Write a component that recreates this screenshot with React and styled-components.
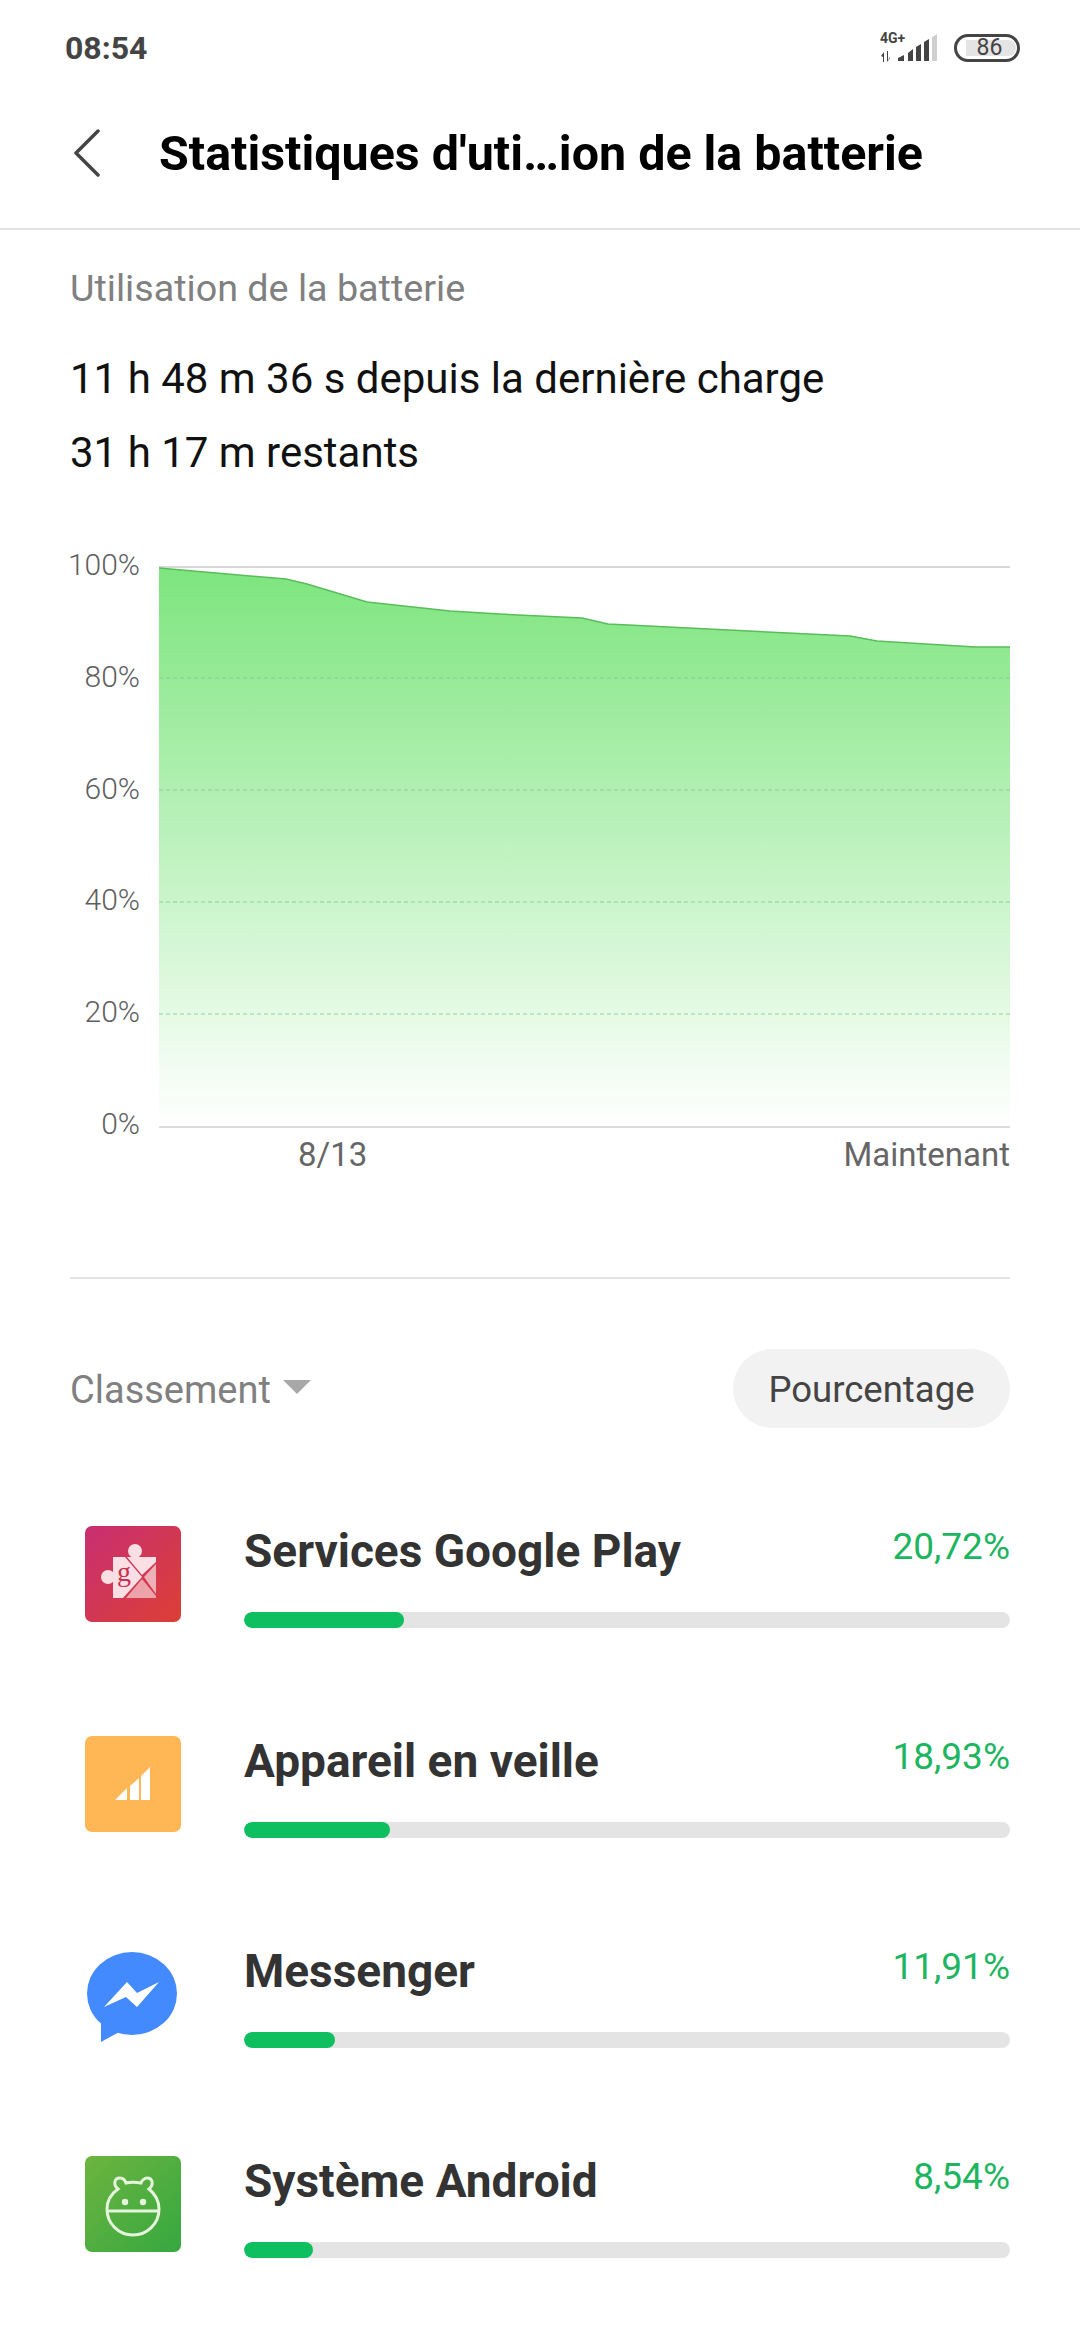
import React from "react";
import styled, { createGlobalStyle } from "styled-components";

const GlobalStyle = createGlobalStyle`
  html, body { margin: 0; padding: 0; background: #fff; }
  body { font-family: Roboto, "Liberation Sans", sans-serif; }
`;

const apps = [
  { name: "Services Google Play", percent: "20,72%", fill: 160, Icon: PlayIcon },
  { name: "Appareil en veille", percent: "18,93%", fill: 146, Icon: IdleIcon },
  { name: "Messenger", percent: "11,91%", fill: 91, Icon: MessengerIcon },
  { name: "Système Android", percent: "8,54%", fill: 69, Icon: AndroidIcon },
];

const curve = "0,2 127,13 148,18 208,36 291,45 341,48 423,52 449,58 691,70 718,75 816,81 851,81";

function PlayIcon() {
  return (
    <svg width="96" height="96" viewBox="0 0 96 96">
      <defs>
        <linearGradient id="playBg" x1="0" y1="0" x2="1" y2="1">
          <stop offset="0" stopColor="#c72f72" />
          <stop offset="1" stopColor="#dc3f35" />
        </linearGradient>
      </defs>
      <rect width="96" height="96" rx="7" fill="url(#playBg)" />
      <circle cx="50" cy="25" r="7" fill="#fbdfe4" />
      <circle cx="23" cy="51" r="7" fill="#fbdfe4" />
      <path d="M28 31H40L57 51L38 72H28Z" fill="#fbdfe4" />
      <path d="M42 31H71V36L57 49Z" fill="#fbdfe4" />
      <path d="M71 38V68L59 51Z" fill="#eeb0b8" />
      <path d="M41 72L57 53L71 70V72Z" fill="#eca3ac" />
      <text x="39" y="55" fontFamily="'Liberation Serif', serif" fontSize="28" fill="#c9304f" textAnchor="middle">g</text>
    </svg>
  );
}

function IdleIcon() {
  return (
    <svg width="96" height="96" viewBox="0 0 96 96">
      <rect width="96" height="96" rx="7" fill="#ffb655" />
      <path d="M30 64L42 52V64Z M45 64V50L54 42V64Z M56 64V40L65 31V64Z" fill="#fff" />
    </svg>
  );
}

function MessengerIcon() {
  return (
    <svg width="96" height="96" viewBox="0 0 96 96">
      <ellipse cx="47" cy="47.500" rx="45" ry="41.500" fill="#448aff" />
      <path d="M16 70V96L36 85Z" fill="#448aff" />
      <path d="M19 61L42 36L52 47L74 36L52 61L41 51Z" fill="#fff" />
    </svg>
  );
}

function AndroidIcon() {
  return (
    <svg width="96" height="96" viewBox="0 0 96 96">
      <defs>
        <linearGradient id="droidBg" x1="0" y1="0" x2="1" y2="1">
          <stop offset="0" stopColor="#6db43f" />
          <stop offset="1" stopColor="#35a840" />
        </linearGradient>
      </defs>
      <rect width="96" height="96" rx="7" fill="url(#droidBg)" />
      <g fill="none" stroke="#e6f4dd" strokeWidth="3">
        <path d="M33 33C28 29 29 22 35 22C38 22 40 24 41 27C45 26 51 26 56 27C57 24 60 22 62 22C68 22 69 29 64 33C70 38 74 45 74 53C74 68 62 79 48 79C34 79 22 68 22 53C22 45 26 38 33 33Z" />
        <path d="M23 55H73" />
      </g>
      <circle cx="40" cy="46" r="3.200" fill="#e6f4dd" />
      <circle cx="58" cy="46" r="3.200" fill="#e6f4dd" />
    </svg>
  );
}

function SignalIcon() {
  return (
    <svg width="60" height="38" viewBox="0 -4 60 38">
      <text x="0" y="10" fontFamily="Roboto, sans-serif" fontWeight="700" fontSize="14" fill="#444">4G+</text>
      <path d="M1 23L4 19V29H3V24Z M7 18H8V27L10 24V25L7 29Z" fill="#444" />
      <path d="M18 28V25L24 22V28Z M28 28V20L33 16V28Z M36 28V14L41 11V28Z M44 28V9L49 6V28Z" fill="#444" />
      <path d="M52 28V4L57 1V28Z" fill="#cfcfcf" />
    </svg>
  );
}

function AreaChart() {
  return (
    <svg width="851" height="562" viewBox="0 0 851 562">
      <defs>
        <linearGradient id="areaFill" x1="0" y1="0" x2="0" y2="1">
          <stop offset="0" stopColor="#7de57e" />
          <stop offset="1" stopColor="#ffffff" />
        </linearGradient>
      </defs>
      <path d="M0 1H851" stroke="#d8d8d8" strokeWidth="2" />
      <polygon points={`${curve} 851,560 0,560`} fill="url(#areaFill)" />
      {[112, 224, 336, 448].map((y) => (
        <path key={y} d={`M0 ${y}H851`} stroke="#7fc88a" strokeOpacity="0.8" strokeWidth="1" strokeDasharray="4 3" />
      ))}
      <polyline points={curve} fill="none" stroke="#58bd5a" strokeWidth="1.500" />
      <path d="M0 561H851" stroke="#dcdcdc" strokeWidth="2" />
    </svg>
  );
}

const Page = styled.div`
  width: 1080px;
  height: 2340px;
  overflow: hidden;
  background: #fff;
`;

const StatusBar = styled.div`
  height: 96px;
  padding: 0 60px 0 65px;
  display: flex;
  align-items: center;
  justify-content: space-between;
  box-sizing: border-box;
`;

const Clock = styled.span`
  font-size: 32px;
  font-weight: 700;
  color: #444;
`;

const StatusIcons = styled.div`
  display: flex;
  align-items: center;
  gap: 14px;
`;

const Battery = styled.div`
  width: 66px;
  height: 28px;
  box-sizing: border-box;
  border: 3px solid #444;
  border-radius: 14px;
  padding: 3px 1px 3px 9px;
  display: flex;
`;

const BatteryLevel = styled.div`
  flex: 1;
  background: #e4e4e4;
  border-radius: 0 8px 8px 0;
  padding-right: 3px;
  font-size: 23px;
  line-height: 16px;
  color: #444;
  text-align: center;
`;

const Header = styled.header`
  height: 134px;
  box-sizing: border-box;
  border-bottom: 2px solid #e2e2e2;
  padding: 0 0 18px 74px;
  display: flex;
  align-items: center;
`;

const BackIcon = styled.svg`
  width: 26px;
  height: 48px;
  margin-right: 59px;
`;

const Title = styled.h1`
  margin: 0;
  font-size: 48.400px;
  font-weight: 700;
  color: #000;
`;

const Usage = styled.section`
  padding: 33px 70px 0;
`;

const UsageLabel = styled.div`
  font-size: 37.700px;
  line-height: 50px;
  color: #808080;
`;

const UsageLine = styled.div`
  font-size: 42px;
  line-height: 74px;
  color: #111;
  &:nth-of-type(2) {
    margin-top: 29px;
  }
`;

const ChartWrap = styled.div`
  display: grid;
  grid-template-columns: 90px 851px;
  column-gap: 19px;
  margin-left: 50px;
  margin-top: 76px;
`;

const YAxis = styled.div`
  display: flex;
  flex-direction: column;
  justify-content: space-between;
  align-items: flex-end;
  margin: -19px 0 -14px;
`;

const AxisLabel = styled.span`
  font-size: 30px;
  line-height: 36px;
  font-weight: 300;
  color: #5f5f5f;
`;

const Plot = styled.div`
  height: 562px;
  svg {
    display: block;
  }
`;

const XAxis = styled.div`
  grid-column: 2;
  display: flex;
  justify-content: space-between;
  padding-left: 139px;
  margin-top: 9px;
`;

const XLabel = styled.span`
  font-size: 33px;
  line-height: 36px;
  color: #666;
`;

const Divider = styled.hr`
  margin: 104px 70px 0;
  border: 0;
  height: 2px;
  background: #e4e4e4;
`;

const SortBar = styled.div`
  margin: 70px 70px 0;
  display: flex;
  align-items: center;
  justify-content: space-between;
`;

const SortLabel = styled.div`
  display: flex;
  align-items: center;
  gap: 12px;
  font-size: 38px;
  line-height: 48px;
  padding-top: 2px;
  color: #808080;
`;

const Caret = styled.span`
  width: 0;
  height: 0;
  margin-top: -6px;
  border-left: 14px solid transparent;
  border-right: 14px solid transparent;
  border-top: 14px solid #a8a8a8;
`;

const Pill = styled.div`
  height: 79px;
  width: 277px;
  border-radius: 40px;
  background: #f2f2f2;
  font-size: 36.500px;
  line-height: 81px;
  text-align: center;
  color: #444;
`;

const AppList = styled.div`
  margin-top: 87px;
  padding: 0 70px 0 85px;
`;

const AppRow = styled.div`
  height: 210px;
  display: grid;
  grid-template-columns: 96px 1fr;
  column-gap: 63px;
`;

const AppIcon = styled.div`
  margin-top: 11px;
  height: 96px;
  svg {
    display: block;
  }
`;

const AppHead = styled.div`
  display: flex;
  justify-content: space-between;
  align-items: flex-start;
  height: 72px;
`;

const AppName = styled.span`
  font-size: 46px;
  line-height: 72px;
  font-weight: 700;
  color: #333;
`;

const AppPercent = styled.span`
  font-size: 37px;
  line-height: 64px;
  color: #1db560;
`;

const Track = styled.div`
  margin-top: 25px;
  height: 16px;
  border-radius: 8px;
  background: #e4e4e4;
  overflow: hidden;
`;

const TrackFill = styled.div`
  height: 100%;
  border-radius: 8px;
  background: #0dbf5e;
`;

export default function App() {
  return (
    <Page>
      <GlobalStyle />
      <StatusBar>
        <Clock>08:54</Clock>
        <StatusIcons>
          <SignalIcon />
          <Battery>
            <BatteryLevel>86</BatteryLevel>
          </Battery>
        </StatusIcons>
      </StatusBar>
      <Header>
        <BackIcon viewBox="0 0 26 48">
          <path d="M24 2L2 24L24 46" fill="none" stroke="#444" strokeWidth="3.500" strokeLinecap="round" strokeLinejoin="round" />
        </BackIcon>
        <Title>Statistiques d'uti…ion de la batterie</Title>
      </Header>
      <Usage>
        <UsageLabel>Utilisation de la batterie</UsageLabel>
        <UsageLine>11 h 48 m 36 s depuis la dernière charge</UsageLine>
        <UsageLine>31 h 17 m restants</UsageLine>
      </Usage>
      <ChartWrap>
        <YAxis>
          {["100%", "80%", "60%", "40%", "20%", "0%"].map((label) => (
            <AxisLabel key={label}>{label}</AxisLabel>
          ))}
        </YAxis>
        <Plot>
          <AreaChart />
        </Plot>
        <XAxis>
          <XLabel>8/13</XLabel>
          <XLabel>Maintenant</XLabel>
        </XAxis>
      </ChartWrap>
      <Divider />
      <SortBar>
        <SortLabel>
          Classement
          <Caret />
        </SortLabel>
        <Pill>Pourcentage</Pill>
      </SortBar>
      <AppList>
        {apps.map(({ name, percent, fill, Icon }) => (
          <AppRow key={name}>
            <AppIcon>
              <Icon />
            </AppIcon>
            <div>
              <AppHead>
                <AppName>{name}</AppName>
                <AppPercent>{percent}</AppPercent>
              </AppHead>
              <Track>
                <TrackFill style={{ width: fill }} />
              </Track>
            </div>
          </AppRow>
        ))}
      </AppList>
    </Page>
  );
}
